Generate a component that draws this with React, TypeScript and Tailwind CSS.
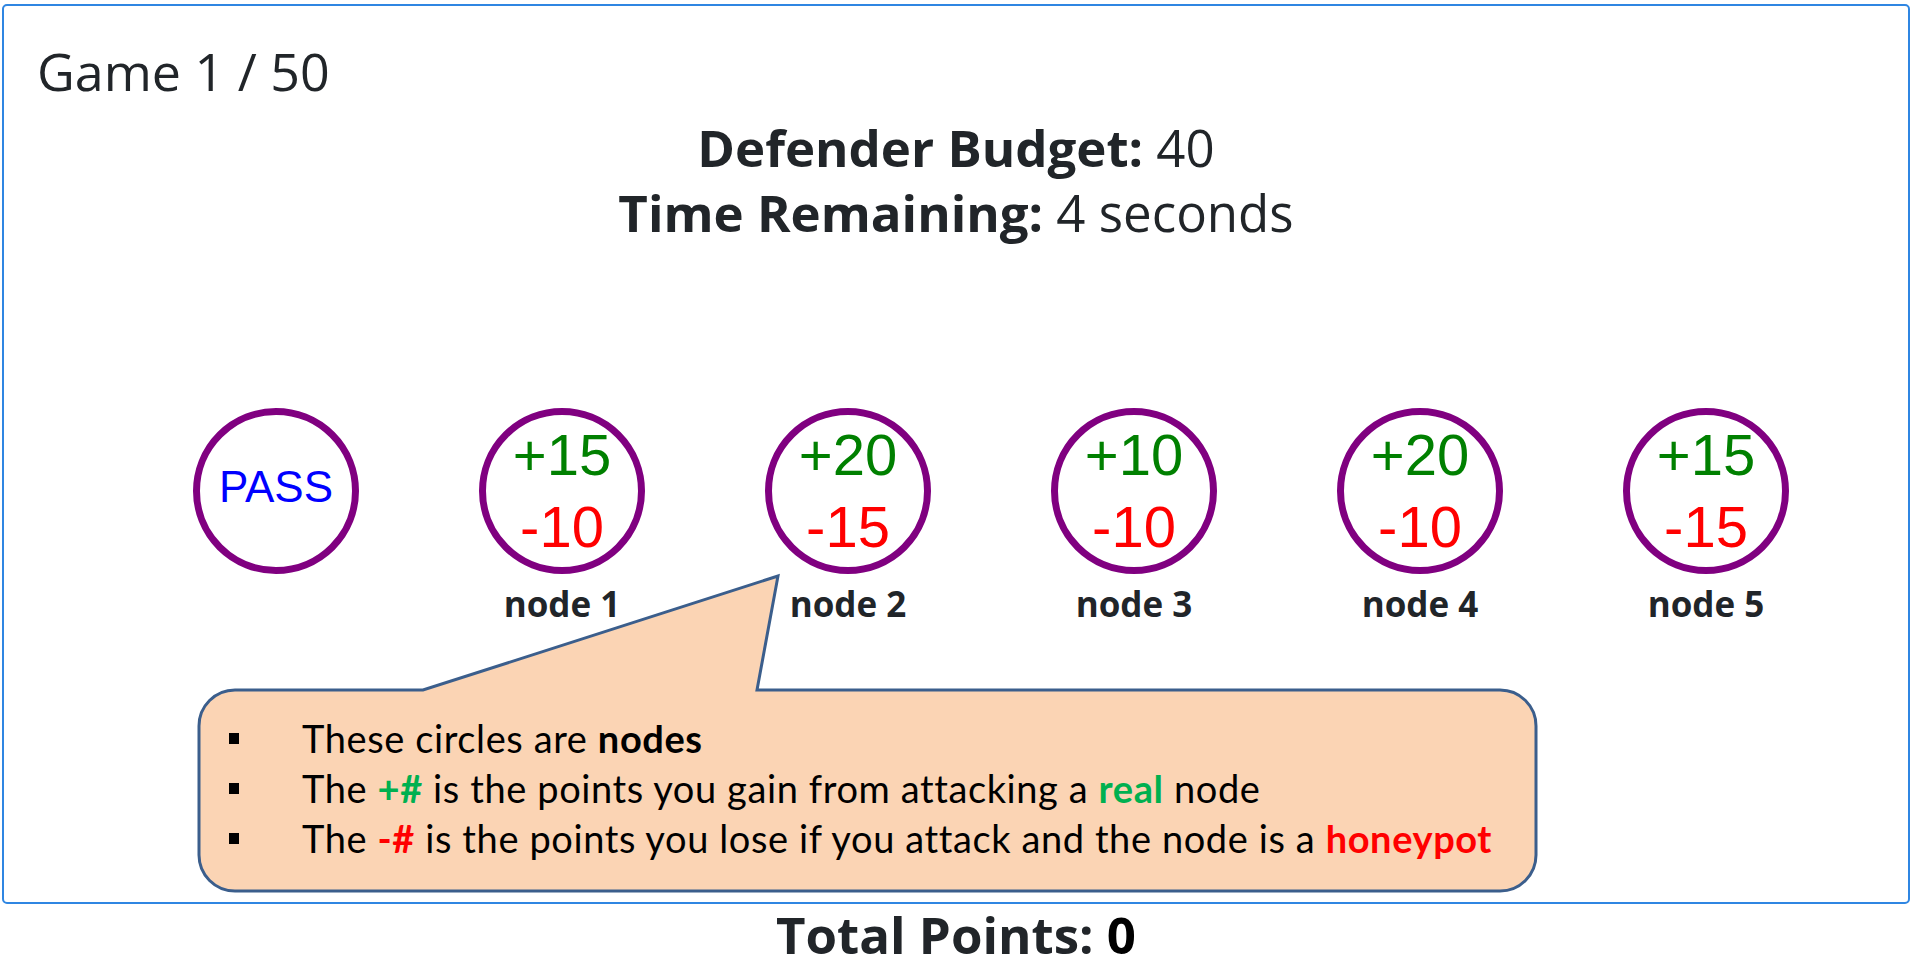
import React from 'react';

interface GameNode {
  label: string;
  gain: number;
  loss: number;
}

const NODES: GameNode[] = [
  { label: 'node 1', gain: 15, loss: 10 },
  { label: 'node 2', gain: 20, loss: 15 },
  { label: 'node 3', gain: 10, loss: 10 },
  { label: 'node 4', gain: 20, loss: 10 },
  { label: 'node 5', gain: 15, loss: 15 },
];

const ui = { fontFamily: '"Open Sans", "Noto Sans", sans-serif' };
const arial = { fontFamily: '"Liberation Sans", Arial, sans-serif' };
const gill = { fontFamily: 'Lato, "Open Sans", sans-serif' };

const Circle: React.FC<{ children: React.ReactNode; className?: string }> = ({ children, className = '' }) => (
  <div
    className={`w-[166px] h-[166px] rounded-full border-[7px] border-[#800080] bg-white flex flex-col items-center justify-center ${className}`}
    style={arial}
  >
    {children}
  </div>
);

const Callout: React.FC = () => (
  <div className="absolute left-[196px] top-[568px] w-[1344px] h-[322px]">
    <svg width="1344" height="322" viewBox="0 0 1344 322" className="absolute inset-0">
      <path
        d="M 39 118 L 227 118 L 582 4 L 561 118 L 1304 118 A 36 36 0 0 1 1340 154 L 1340 283 A 36 36 0 0 1 1304 319 L 39 319 A 36 36 0 0 1 3 283 L 3 154 A 36 36 0 0 1 39 118 Z"
        fill="#fbd4b4"
        stroke="#3b5e8c"
        strokeWidth="3"
        strokeLinejoin="miter"
      />
    </svg>
    <ul className="absolute left-[33px] top-[141px] text-[38px] leading-[50px] tracking-[0.6px] text-black" style={gill}>
      <li className="flex items-center">
        <span className="w-[10px] h-[11px] bg-black mr-[63px]" />
        <span>
          These circles are <b>nodes</b>
        </span>
      </li>
      <li className="flex items-center">
        <span className="w-[10px] h-[11px] bg-black mr-[63px]" />
        <span>
          The <b className="text-[#00b050]">+#</b> is the points you gain from attacking a{' '}
          <b className="text-[#00b050]">real</b> node
        </span>
      </li>
      <li className="flex items-center">
        <span className="w-[10px] h-[11px] bg-black mr-[63px]" />
        <span>
          The <b className="text-[#ff0000]">-#</b> is the points you lose if you attack and the node is a{' '}
          <b className="text-[#ff0000]">honeypot</b>
        </span>
      </li>
    </ul>
  </div>
);

export default function App() {
  return (
    <div className="relative w-[1912px] h-[973px] bg-white text-[#212529]" style={ui}>
      {/* Game board */}
      <div className="mx-[2px] mt-[4px] h-[900px] border-2 border-[#2f86e2] rounded-[5px] pt-[34px]">
        <h2 className="pl-[33px] text-[52px] leading-[62px] font-normal">Game 1 / 50</h2>

        <div className="mt-[13px] text-center text-[51px] leading-[65px]">
          <div>
            <b>Defender Budget:</b> 40
          </div>
          <div>
            <b>Time Remaining:</b> 4 seconds
          </div>
        </div>

        <div className="mt-[163px] ml-[129px] grid grid-cols-[repeat(6,286px)]">
          <div className="flex flex-col items-center">
            <Circle className="pb-[8px]">
              <span className="text-[44px] leading-[50px] text-[#0000ff]">PASS</span>
            </Circle>
          </div>
          {NODES.map((n) => (
            <div key={n.label} className="flex flex-col items-center">
              <Circle>
                <span className="text-[58px] leading-[72px] text-[#008000]">+{n.gain}</span>
                <span className="text-[58px] leading-[72px] text-[#ff0000]">-{n.loss}</span>
              </Circle>
              <div className="mt-[9px] text-[35px] leading-[42px] font-bold">{n.label}</div>
            </div>
          ))}
        </div>
      </div>

      <div className="text-center text-[51px] leading-[60px] font-bold">
        Total Points: <span className="text-black">0</span>
      </div>

      <Callout />
    </div>
  );
}
